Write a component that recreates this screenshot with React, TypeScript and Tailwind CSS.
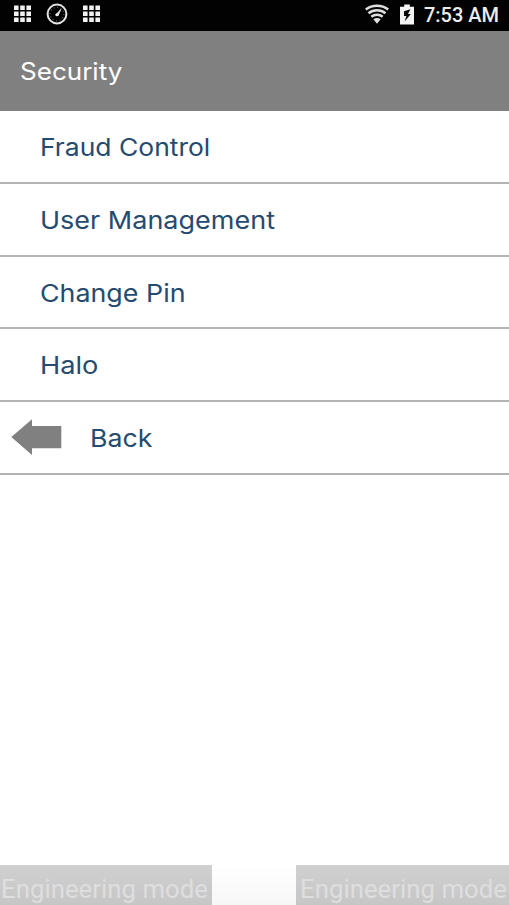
import React from 'react';
import { clsx } from 'clsx';

interface MenuItem {
    label: string;
    className?: string;
    back?: boolean;
}

const items: MenuItem[] = [
    { label: 'Fraud Control', className: 'scale-x-[1.08]' },
    { label: 'User Management', className: 'scale-x-[1.102]' },
    { label: 'Change Pin', className: 'scale-x-[1.095]' },
    { label: 'Halo', className: 'scale-x-[1.11]' },
    { label: 'Back', className: 'scale-x-[1.09]', back: true },
];

const GridIcon = () => (
    <svg width="17" height="18" viewBox="0 0 17 18" fill="#f2f2f2">
        {[0, 6, 12].map((y) =>
            [0, 6.2, 12.4].map((x) => <rect key={`${x}-${y}`} x={x} y={y + 0.4} width="4.6" height="4.6" rx="0.3" />)
        )}
    </svg>
);

const GaugeIcon = () => (
    <svg width="22" height="22" viewBox="0 0 22 22" fill="none" stroke="#e4e4e4">
        <circle cx="11" cy="11" r="9.4" strokeWidth="2" />
        <circle cx="11" cy="11" r="6.8" strokeWidth="1.2" strokeDasharray="0.9 2.66" stroke="#707070" />
        <path d="M9.8 12L14.8 6.3L12.2 12.6Z" fill="#f0f0f0" strokeWidth="0.8" />
        <circle cx="10.9" cy="11.8" r="1.5" fill="#f0f0f0" stroke="none" />
    </svg>
);

const WifiIcon = () => (
    <svg width="24" height="20" viewBox="0 0 24 20" fill="none" stroke="#dedede" strokeWidth="2.5">
        <path d="M0.8 5.4C7.4 0.4 16.6 0.4 23.2 5.4" />
        <path d="M3.5 9.2C8.5 5.2 15.5 5.2 20.5 9.2" />
        <path d="M6.3 12.8C9.6 10.2 14.4 10.2 17.7 12.8" />
        <path d="M8.3 15.2C10.4 13.7 13.6 13.7 15.7 15.2L12 19.8Z" fill="#dedede" stroke="none" />
    </svg>
);

const BatteryIcon = () => (
    <svg width="14" height="21" viewBox="0 0 14 21">
        <path d="M4.2 0.5H9.8V2.7H14V20.5H0V2.7H4.2Z" fill="#f4f4f4" />
        <path d="M10.4 5.2L4 7.2V12H6.4L4.6 17.6L10.8 10H8Z" fill="#080808" />
    </svg>
);

const BackArrow = () => (
    <svg width="51" height="36" viewBox="0 0 51 36" fill="#808080">
        <path d="M0.3 18L21 0.3V7H50.3V29.3H21V36Z" />
    </svg>
);

export default function App() {
    return (
        <div className="flex h-[905px] w-[509px] flex-col overflow-hidden bg-white font-['Inter',sans-serif]">
            <div className="flex h-[31px] shrink-0 items-center justify-between bg-[#020202] pr-[10px] pb-[3px] pl-[14px]">
                <div className="flex items-center gap-[15px]">
                    <GridIcon />
                    <GaugeIcon />
                    <GridIcon />
                </div>
                <div className="flex items-center">
                    <WifiIcon />
                    <span className="ml-[11px]">
                        <BatteryIcon />
                    </span>
                    <span className="ml-[10px] pt-[2px] font-['Roboto',sans-serif] text-[20px] leading-[26px] font-medium text-[#ececec]">
                        7:53 AM
                    </span>
                </div>
            </div>

            <header className="flex h-[80px] shrink-0 items-center bg-[#808080] pt-[2px] pl-[19.5px] text-[24px] text-white">
                <span className="origin-left scale-x-[1.085]">Security</span>
            </header>

            <ul>
                {items.map(({ label, className, back }) => (
                    <li
                        key={label}
                        className="flex h-[72.75px] items-center border-b-2 border-[#b4b4b4] text-[24.5px] text-[#264b6e]"
                    >
                        {back && (
                            <span className="ml-[11px] w-[51px]">
                                <BackArrow />
                            </span>
                        )}
                        <span className={clsx('origin-left pt-[2px]', back ? 'ml-[28px]' : 'ml-[40px]', className)}>
                            {label}
                        </span>
                    </li>
                ))}
            </ul>

            <footer className="mt-auto flex h-[40px] shrink-0 justify-between bg-linear-to-b from-white to-[#f7f7f7] font-['Roboto',sans-serif] text-[25.8px] leading-[48px] whitespace-nowrap text-[#dedede]">
                <div className="w-[212px] bg-linear-to-b from-[#d0d0d0] to-[#c6c6c6] pl-[1px]">Engineering mode</div>
                <div className="w-[213px] bg-linear-to-b from-[#d0d0d0] to-[#c6c6c6] pl-[4px]">Engineering mode</div>
            </footer>
        </div>
    );
}
